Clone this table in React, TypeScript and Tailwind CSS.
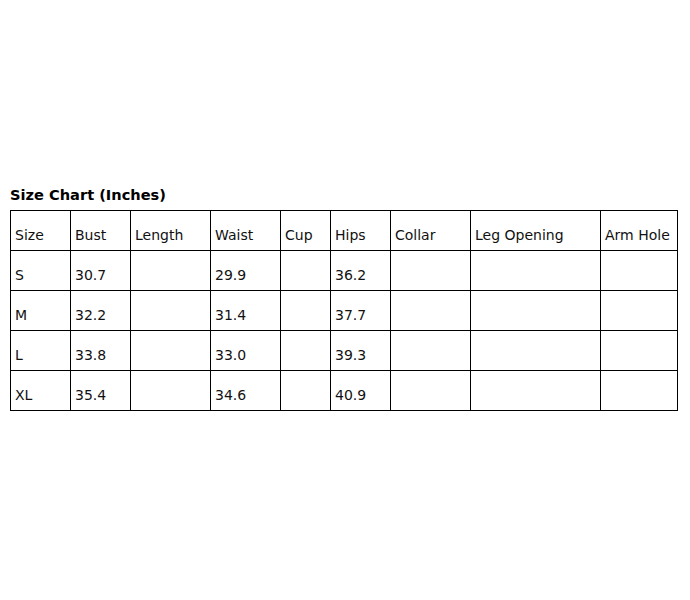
const COLUMNS = [
  { label: "Size", width: "w-[60px]" },
  { label: "Bust", width: "w-[60px]" },
  { label: "Length", width: "w-[80px]" },
  { label: "Waist", width: "w-[70px]" },
  { label: "Cup", width: "w-[50px]" },
  { label: "Hips", width: "w-[60px]" },
  { label: "Collar", width: "w-[80px]" },
  { label: "Leg Opening", width: "w-[130px]" },
  { label: "Arm Hole", width: "w-[77px]" },
];

const ROWS = [
  ["S", "30.7", "", "29.9", "", "36.2", "", "", ""],
  ["M", "32.2", "", "31.4", "", "37.7", "", "", ""],
  ["L", "33.8", "", "33.0", "", "39.3", "", "", ""],
  ["XL", "35.4", "", "34.6", "", "40.9", "", "", ""],
];

function Cell({ children }: { children?: React.ReactNode }) {
  return (
    <td className="h-[40px] border border-black p-0 pl-1 pt-[9px] align-middle text-[14px] leading-[16px] whitespace-nowrap text-[#111]">
      {children}
    </td>
  );
}

export default function App() {
  return (
    <div
      className="w-[690px] h-[600px] bg-white text-black px-[10px] pt-[187px]"
      style={{ fontFamily: '"DejaVu Sans", Verdana, sans-serif' }}
    >
      <h2 className="text-[14.6px] font-bold leading-[16px] mb-[7px]">Size Chart (Inches)</h2>
      <table className="w-[667px] table-fixed border-collapse">
        <colgroup>
          {COLUMNS.map((c) => (
            <col key={c.label} className={c.width} />
          ))}
        </colgroup>
        <tbody>
          <tr>
            {COLUMNS.map((c) => (
              <Cell key={c.label}>{c.label}</Cell>
            ))}
          </tr>
          {ROWS.map((row) => (
            <tr key={row[0]}>
              {row.map((v, i) => (
                <Cell key={COLUMNS[i].label}>{v}</Cell>
              ))}
            </tr>
          ))}
        </tbody>
      </table>
    </div>
  );
}
